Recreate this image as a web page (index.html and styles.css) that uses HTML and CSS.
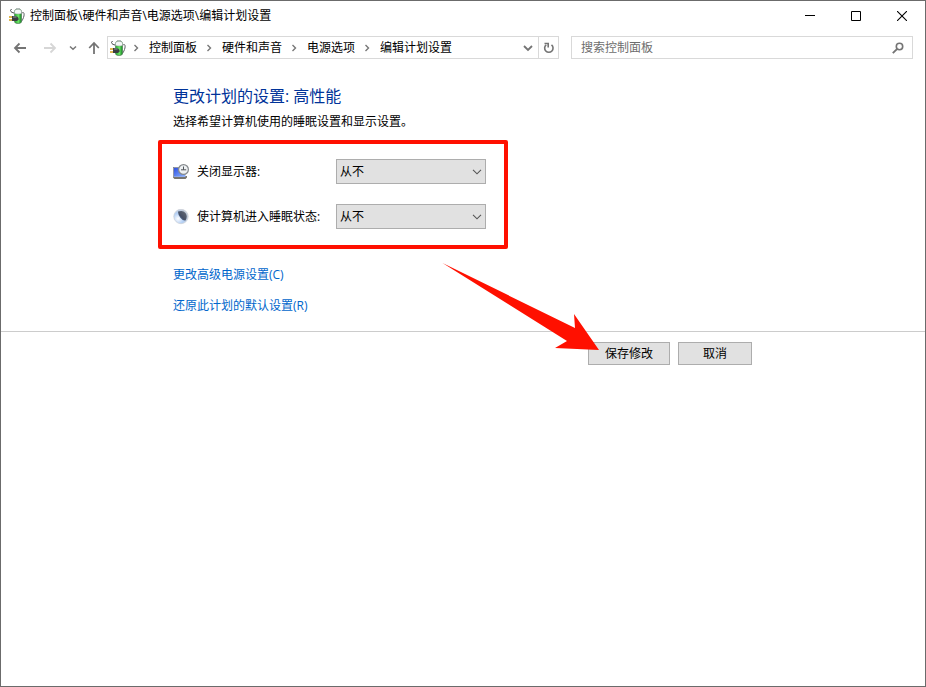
FILE: index.html
```html
<!DOCTYPE html>
<html lang="zh-CN">
<head>
<meta charset="utf-8">
<meta name="viewport" content="width=device-width, initial-scale=1">
<title>编辑计划设置</title>
<link rel="stylesheet" href="styles.css">
</head>
<body>
<svg class="sprite" aria-hidden="true">
  <defs>
    <linearGradient id="cell" x1="0" x2="1"><stop offset="0" stop-color="#1fa32a"/><stop offset=".55" stop-color="#6fe868"/><stop offset="1" stop-color="#0f7f1e"/></linearGradient>
    <linearGradient id="screen" x1="0" y1="0" x2="1" y2="1"><stop offset="0" stop-color="#2f50e0"/><stop offset="1" stop-color="#88b2ff"/></linearGradient>
    <radialGradient id="orb" cx=".3" cy=".65" r=".75"><stop offset="0" stop-color="#ffffff"/><stop offset=".5" stop-color="#b4d0f5"/><stop offset="1" stop-color="#c4cad3"/></radialGradient>
    <linearGradient id="shade" x1="1" y1="0" x2="0" y2="1"><stop offset="0" stop-color="#6a6f78"/><stop offset=".6" stop-color="#465066"/><stop offset="1" stop-color="#6d9ee4"/></linearGradient>
  </defs>
  <symbol id="power" viewBox="0 0 16 16">
    <path d="M1.500 2.500 2.500 1M1.500 2.500C2 4.500 3.500 4.500 5 5" fill="none" stroke="#44484a"/>
    <path d="M12.500 5.500C15.500 2.500 15.500 7 14.500 9.500S13 13 12 13.500" fill="none" stroke="#5c6062"/>
    <path d="M5.500 3.500Q5.500 1 9 1t3.500 2.500V13.500q0 2-3.500 2T5.500 13.500z" fill="url(#cell)" stroke="#4f7a55" stroke-width=".7"/>
    <path d="M5.500 3.300Q5.500 1.200 9 1.200t3.500 2.100V5.500Q9 6.500 5.500 5.500z" fill="#f4f8f7" stroke="#8e9996" stroke-width=".5"/>
    <path d="M7 0h4v1.300H7z" fill="#b3bbb9"/>
    <path d="M0 9h3.500M0 12h3.500" stroke="#d3a119" stroke-width="1.500"/>
    <path d="M3 8h2.500l2.500 .5 1.500 1.500v1.500L8 13H3z" fill="#3a3e40"/>
    <path d="M4 9h3.500" stroke="#8d9396"/>
  </symbol>
  <symbol id="sep" viewBox="0 0 8 8"><path d="M2.500 1 5.500 4 2.500 7" fill="none" stroke="#777" stroke-width="1.400"/></symbol>
</svg>

<div class="window">
  <header class="titlebar">
    <svg class="icon"><use href="#power"/></svg>
    <span class="caption">控制面板\硬件和声音\电源选项\编辑计划设置</span>
    <div class="caption-buttons">
      <button type="button" aria-label="最小化"><svg width="10" height="10"><path d="M0 4.500h10" stroke="#000"/></svg></button>
      <button type="button" aria-label="最大化"><svg width="10" height="10"><path d="M.5.5h9v9h-9z" fill="none" stroke="#000"/></svg></button>
      <button type="button" aria-label="关闭"><svg width="10" height="10"><path d="M0 0l10 10M10 0 0 10" stroke="#000" stroke-width="1.100"/></svg></button>
    </div>
  </header>

  <nav class="toolbar" aria-label="导航">
    <div class="history">
      <button type="button" aria-label="后退"><svg width="14" height="12"><path d="M13 6H2M6.500 1.500 2 6l4.500 4.500" fill="none" stroke="#747474" stroke-width="1.800"/></svg></button>
      <button type="button" aria-label="前进" disabled><svg width="14" height="12"><path d="M1 6h11M7.500 1.500 12 6l-4.500 4.500" fill="none" stroke="#d6d6d6" stroke-width="1.800"/></svg></button>
      <button type="button" class="recent" aria-label="最近浏览的位置"><svg width="8" height="6"><path d="M1 1.500 4 4.300l3-2.800" fill="none" stroke="#777" stroke-width="1.500"/></svg></button>
      <button type="button" class="up" aria-label="向上"><svg width="12" height="14"><path d="M6 13V2M1.200 7 6 2l4.800 5" fill="none" stroke="#747474" stroke-width="1.800"/></svg></button>
    </div>
    <div class="address">
      <svg class="icon"><use href="#power"/></svg>
      <ol class="crumbs">
        <li><svg class="sep"><use href="#sep"/></svg><a href="#">控制面板</a></li>
        <li><svg class="sep"><use href="#sep"/></svg><a href="#">硬件和声音</a></li>
        <li><svg class="sep"><use href="#sep"/></svg><a href="#">电源选项</a></li>
        <li><svg class="sep"><use href="#sep"/></svg><a href="#">编辑计划设置</a></li>
      </ol>
      <button type="button" aria-label="历史记录"><svg width="10" height="8"><path d="M1 2l4 4 4-4" fill="none" stroke="#747474" stroke-width="1.800"/></svg></button>
      <button type="button" class="refresh" aria-label="刷新"><svg width="12" height="12"><path d="M8.500 2.800A4.200 4.200 0 1 1 3.200 2.800" fill="none" stroke="#747474" stroke-width="1.600"/><path d="M1.500 1.500H5.200V5.400" fill="none" stroke="#747474" stroke-width="1.600"/></svg></button>
    </div>
    <div class="search">
      <input type="search" placeholder="搜索控制面板" aria-label="搜索控制面板">
      <button type="button" aria-label="搜索"><svg width="12" height="12"><circle cx="7.500" cy="4.500" r="3.200" fill="none" stroke="#747474" stroke-width="1.600"/><path d="M5.200 6.800.8 11.200" stroke="#747474" stroke-width="1.900"/></svg></button>
    </div>
  </nav>

  <main>
    <section class="content">
      <h1>更改计划的设置: 高性能</h1>
      <p>选择希望计算机使用的睡眠设置和显示设置。</p>
      <div class="settings">
        <div class="setting">
          <svg class="icon" viewBox="0 0 16 16">
            <path d="M0 3h12v9h2v1.500l-1.500 1.500H1.500L0 13.500z" fill="#77756f"/>
            <path d="M.5 3.500h12V13H.5z" fill="#a9b7e0"/>
            <path d="M1 4h11v8.500H1z" fill="url(#screen)"/>
            <circle cx="10.500" cy="5.500" r="4.900" fill="#eef1f3" stroke="#85898d" stroke-width="1.200"/>
            <path d="M10.500 2.500v3.300h2.700M8 5.800h2.500" fill="none" stroke="#50555a"/>
          </svg>
          <label for="display">关闭显示器:</label>
          <div class="combo">
            <select id="display"><option>从不</option></select>
            <svg width="10" height="6" aria-hidden="true"><path d="M1 .8 5 4.800 9 .8" fill="none" stroke="#555" stroke-width="1.100"/></svg>
          </div>
        </div>
        <div class="setting">
          <svg class="icon" viewBox="0 0 16 16">
            <circle cx="8" cy="7.500" r="7.200" fill="url(#orb)" stroke="#cdd2d9" stroke-width=".8"/>
            <path d="M5 2.500Q10 .8 12.500 4T12.500 11.500Q10 12 7.500 9T5 2.500z" fill="url(#shade)"/>
          </svg>
          <label for="sleep">使计算机进入睡眠状态:</label>
          <div class="combo">
            <select id="sleep"><option>从不</option></select>
            <svg width="10" height="6" aria-hidden="true"><path d="M1 .8 5 4.800 9 .8" fill="none" stroke="#555" stroke-width="1.100"/></svg>
          </div>
        </div>
      </div>
      <div class="links">
        <a href="#">更改高级电源设置(C)</a>
        <a href="#">还原此计划的默认设置(R)</a>
      </div>
    </section>
    <footer class="actions">
      <div class="save">
        <button type="button">保存修改</button>
        <svg class="pointer" width="160" height="92" aria-hidden="true"><path d="M2.500 3 135 68 134 54 159 90 115 88 127 81z" fill="#ff1000"/></svg>
      </div>
      <button type="button" class="cancel">取消</button>
    </footer>
  </main>
</div>
</body>
</html>
```
FILE: styles.css
```css
* { box-sizing: border-box; }

body {
  margin: 0;
  font: 12px/16px "Open Sans", "Noto Sans CJK SC", sans-serif;
  color: #000;
  background: #fff;
}

button, input, select { font: inherit; color: inherit; }
button { padding: 0; border: 0; background: none; }
svg { display: block; flex: none; }
a { text-decoration: none; }

.sprite { position: absolute; width: 0; height: 0; }
.icon { width: 16px; height: 16px; }

.window {
  min-height: 100vh;
  border: 1px solid #6b6b6b;
}

.titlebar {
  display: flex;
  align-items: center;
  height: 30px;
  padding-left: 8px;
}

.caption { flex: 1; margin-left: 5px; white-space: nowrap; }
.caption-buttons { display: flex; align-self: stretch; }
.caption-buttons button { display: grid; place-items: center; width: 46px; }

.toolbar {
  display: flex;
  padding: 5px 12px 0 11px;
}

.history { display: flex; margin-right: 1px; }
.history button { display: grid; place-items: center; width: 30px; height: 23px; }
.history button:first-child { width: 16px; margin-right: 7px; }
.history .recent { width: 16px; }
.history .up { width: 25px; }

.address, .search {
  display: flex;
  align-items: center;
  height: 23px;
  border: 1px solid #d9d9d9;
}

.address { flex: 1; padding-left: 2px; }
.address button { display: grid; place-items: center; width: 20px; height: 21px; }
.address .refresh { border-left: 1px solid #d9d9d9; }

.crumbs {
  display: flex;
  flex: 1;
  margin: 0;
  padding: 0;
  list-style: none;
  white-space: nowrap;
}

.crumbs li { display: flex; align-items: center; }
.crumbs a { color: #000; }
.sep { width: 8px; height: 8px; margin: 0 9px 0 8px; }
.crumbs li:first-child .sep { margin-left: 6px; }

.search { flex: 0 1 342px; margin-left: 12px; padding: 0 8px; }
.search input {
  flex: 1;
  min-width: 0;
  padding: 0 1px;
  border: 0;
  outline: 0;
  background: none;
}
.search input::placeholder { color: #6d6d6d; opacity: 1; }

.content {
  padding: 26px 16px 17px 172px;
  border-bottom: 1px solid #ccc;
}

h1 {
  margin: 0 0 7px;
  font-size: 16px;
  line-height: 22px;
  font-weight: 400;
  color: #003399;
}

p { margin: 0 0 10px; }

.settings {
  display: grid;
  gap: 20px;
  width: fit-content;
  margin-left: -15px;
  padding: 15px 18px 16px 11px;
  border: 4px solid #ff1000;
  border-radius: 2px;
}

.setting {
  display: grid;
  grid-template-columns: 16px 133px 150px;
  column-gap: 7px;
  align-items: center;
}
.setting label { padding-left: 1px; white-space: nowrap; }

.combo { display: grid; align-items: center; }
.combo > * { grid-area: 1 / 1; }
.combo svg { justify-self: end; margin-right: 4px; pointer-events: none; }
.combo select {
  appearance: none;
  width: 100%;
  height: 25px;
  padding: 0 20px 0 3px;
  border: 1px solid #adadad;
  border-radius: 0;
  background: #e1e1e1;
}

.links {
  display: grid;
  justify-items: start;
  gap: 15px;
  margin-top: 18px;
}
.links a { color: #0066cc; }

.actions {
  display: flex;
  justify-content: flex-end;
  gap: 8px;
  max-width: 751px;
  padding-top: 10px;
}
.actions button {
  width: 82px;
  height: 23px;
  border: 1px solid #adadad;
  background: #e1e1e1;
}
.actions .cancel { width: 74px; }

.save { position: relative; }
.pointer {
  position: absolute;
  left: -148px;
  top: -82px;
  pointer-events: none;
}
```
